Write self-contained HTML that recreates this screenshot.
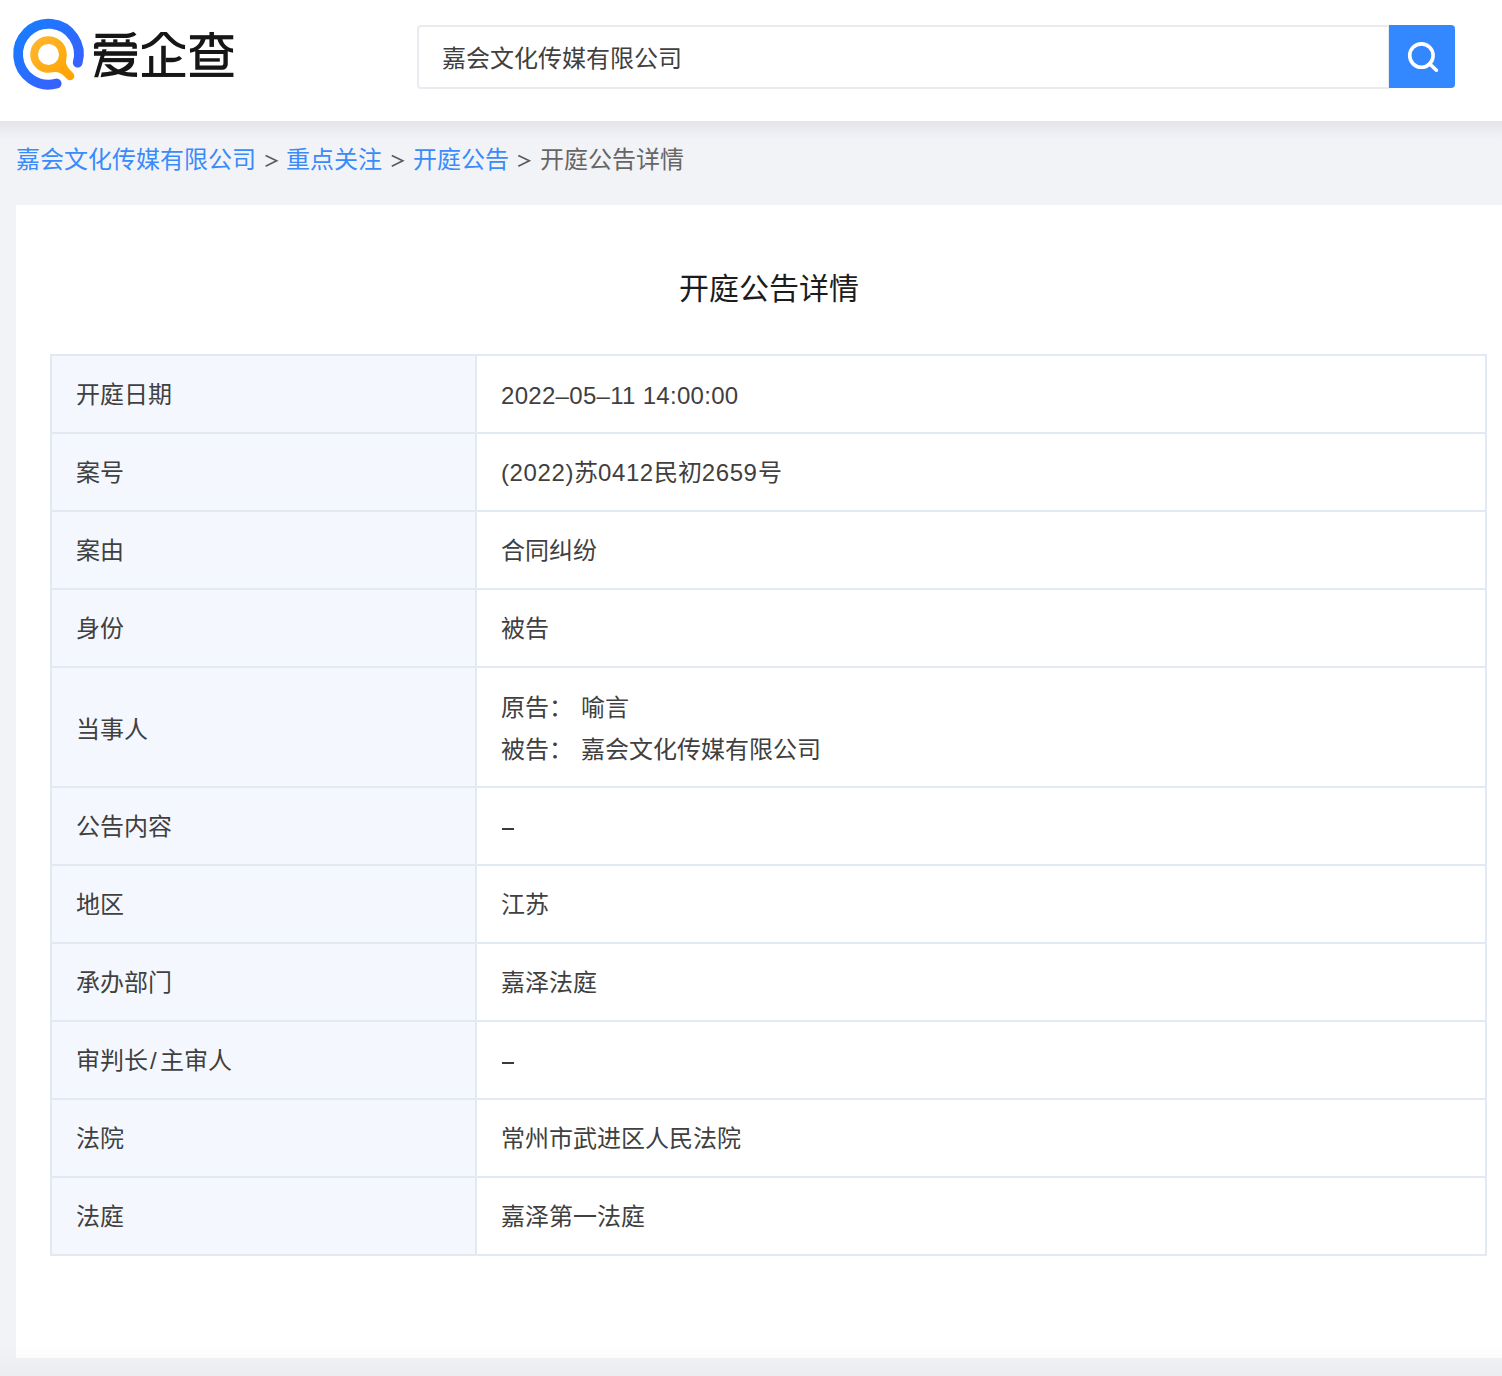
<!DOCTYPE html>
<html lang="zh-CN">
<head>
<meta charset="utf-8">
<title>开庭公告详情</title>
<style>
*{margin:0;padding:0;box-sizing:border-box;}
html,body{width:1502px;height:1376px;overflow:hidden;}
body{background:#F2F3F7;font-family:"Liberation Sans",sans-serif;color:#404040;position:relative;}
.header{position:absolute;left:0;top:0;width:1502px;height:121px;background:#fff;}
.shadow{position:absolute;left:0;top:121px;width:1502px;height:19px;background:linear-gradient(#E4E5EA,#F2F3F7);}
.logo{position:absolute;left:0;top:0;}
.search{position:absolute;left:417px;top:25px;width:973px;height:64px;border:2px solid #E8ECF1;border-radius:4px 0 0 4px;background:#fff;}
.search span{position:absolute;left:23px;top:16px;font-size:24px;line-height:32px;color:#404040;white-space:nowrap;}
.btn{position:absolute;left:1389px;top:25px;width:66px;height:63px;background:#3388FF;border-radius:0 4px 4px 0;}
.bc{position:absolute;left:0;top:130px;width:1502px;height:60px;font-size:24px;line-height:32px;white-space:nowrap;}
.bc a,.bc .cur{position:absolute;top:14px;}
.bc .seps{position:absolute;left:0;top:0;}
.bc a{color:#3A8BFA;text-decoration:none;}
.bc .cur{color:#666;}
.card{position:absolute;left:16px;top:205px;width:1505px;height:1153px;background:#fff;}
.title{position:absolute;left:0;top:63px;width:1505px;text-align:center;font-size:30px;line-height:42px;color:#1c1c1c;}
.tbl{position:absolute;left:34px;top:149px;width:1437px;border:2px solid #E3E9F3;border-bottom:none;}
.row{position:relative;height:78px;border-bottom:2px solid #E3E9F3;}
.row.tall{height:120px;}
.lab{position:absolute;left:0;top:0;bottom:0;width:425px;background:#F4F8FE;border-right:2px solid #E3E9F3;}
.lab span,.val span{position:absolute;left:24px;top:23px;font-size:24px;line-height:32px;white-space:nowrap;}
.val span{top:23px;left:22px;}
.val span.lat{top:24px;}
.val{position:absolute;left:427px;top:0;bottom:0;right:0;}
.tall .lab span{top:46px;}
.dash{position:absolute;left:23px;top:40px;width:12px;height:2px;background:#3a3a3a;}
.sl{font-style:normal;padding:0 3px 0 2px;}
.fade{position:absolute;left:0;top:1342px;width:1502px;height:34px;background:linear-gradient(rgba(0,0,30,0),rgba(0,0,30,0.026));}
.val i{font-style:normal;letter-spacing:0.6px;}
.lat{letter-spacing:0.3px;}
.val b{font-weight:normal;margin-left:8px;}
.tall .val .l1{top:24px;}
.tall .val .l2{top:66px;}
</style>
</head>
<body>
<div class="header">
  <svg class="logo" width="260" height="121" viewBox="0 0 260 121">
    <defs>
      <linearGradient id="gb" x1="0" y1="0" x2="1" y2="1"><stop offset="0" stop-color="#167EFF"/><stop offset="1" stop-color="#3D5CFF"/></linearGradient>
      <linearGradient id="go" x1="0" y1="0" x2="1" y2="0"><stop offset="0" stop-color="#FFB52A"/><stop offset="1" stop-color="#FFA300"/></linearGradient>
    </defs>
    <path d="M56.68,83.48 A30.4,30.4 0 1 1 77.69,62.68" fill="none" stroke="url(#gb)" stroke-width="9.8" stroke-linecap="round"/>
    <g transform="translate(48.5,54.5) rotate(45)">
      <path fill="url(#go)" fill-rule="evenodd" d="M15.43,9.84 A12,12 0 0 1 25.54,4.3 L30.5,4.3 A4.3,4.3 0 0 0 30.5,-4.3 L25.54,-4.3 A12,12 0 0 1 15.43,-9.84 A18.3,18.3 0 1 0 15.43,9.84 Z M10.5,0 A10.5,10.5 0 1 0 -10.5,0 A10.5,10.5 0 1 0 10.5,0 Z"/>
    </g>
    <g fill="#161616">
      <g transform="translate(90,28) scale(0.037793)">
        <path d="M145,150 L960,150 C1040,150 1100,130 1150,100 L1230,175 C1160,235 1060,265 960,265 L145,265 Z"/>
        <rect x="300" y="300" width="110" height="90"/><rect x="615" y="300" width="110" height="90"/><rect x="945" y="300" width="105" height="90"/>
        <path d="M105,550 L105,470 C105,410 140,375 200,375 L1145,375 C1205,375 1240,410 1240,470 L1240,550 L1120,550 L1120,495 L220,495 L220,550 Z"/>
        <rect x="105" y="615" width="1140" height="120"/>
        <path d="M330,565 L440,565 L215,1300 L110,1300 Z"/>
        <rect x="320" y="795" width="845" height="110"/>
        <path d="M1030,900 L1165,795 L1165,905 C1150,1010 1060,1100 920,1160 C760,1230 520,1285 280,1300 L310,1180 C520,1165 680,1130 760,1100 C880,1050 980,970 1030,905 Z"/>
        <path d="M380,960 L540,960 C620,1030 700,1080 790,1115 C920,1165 1080,1180 1245,1180 L1245,1295 C1060,1290 880,1265 740,1215 C600,1165 480,1080 380,960 Z"/>
      </g>
      <g transform="translate(138,28) scale(0.037793)">
        <path d="M600,105 L760,105 C900,260 1050,430 1245,450 L1245,560 C1020,540 830,370 680,185 C530,370 340,540 105,560 L105,450 C300,430 460,260 600,105 Z"/>
        <rect x="615" y="470" width="120" height="740"/>
        <rect x="295" y="740" width="110" height="470"/>
        <path d="M735,790 L900,790 C980,790 1040,775 1090,740 L1165,810 C1090,880 1000,905 900,905 L735,905 Z"/>
        <rect x="105" y="1190" width="1145" height="105"/>
      </g>
      <g transform="translate(186,28) scale(0.037793)">
        <rect x="620" y="105" width="120" height="395"/>
        <rect x="105" y="190" width="1145" height="110"/>
        <path d="M390,290 L520,290 C470,460 350,620 105,655 L105,545 C270,520 360,420 390,290 Z"/>
        <path d="M830,290 L960,290 C990,420 1080,520 1245,545 L1245,655 C1000,620 880,460 830,290 Z"/>
        <path fill-rule="evenodd" d="M245,580 L1105,580 L1105,950 C1105,1040 1040,1105 950,1105 L245,1105 Z M360,690 L990,690 L990,930 C990,970 970,995 930,995 L360,995 Z"/>
        <rect x="360" y="800" width="535" height="90"/>
        <rect x="105" y="1185" width="1150" height="110"/>
      </g>
    </g>
  </svg>
  <div class="search"><span>嘉会文化传媒有限公司</span></div>
  <div class="btn"><svg width="66" height="63" viewBox="1389 25 66 63"><circle cx="1421.4" cy="55.6" r="11.7" fill="none" stroke="#fff" stroke-width="3.6"/><line x1="1429.6" y1="63.8" x2="1436.4" y2="70.2" stroke="#fff" stroke-width="3.6" stroke-linecap="round"/></svg></div>
</div>
<div class="shadow"></div>
<div class="bc">
  <a style="left:16px">嘉会文化传媒有限公司</a>
  <a style="left:286px">重点关注</a>
  <a style="left:413.3px">开庭公告</a>
  <span class="cur" style="left:539.7px">开庭公告详情</span>
  <svg class="seps" width="1502" height="60" viewBox="0 130 1502 60"><g fill="none" stroke="#5c5c5c" stroke-width="1.7"><polyline points="265.6,155.4 276.6,160.8 265.6,166.2"/><polyline points="391.8,155.4 402.8,160.8 391.8,166.2"/><polyline points="518.3,155.4 529.3,160.8 518.3,166.2"/></g></svg>
</div>
<div class="card">
  <div class="title">开庭公告详情</div>
  <div class="tbl">
    <div class="row"><div class="lab"><span>开庭日期</span></div><div class="val"><span class="lat">2022–05–11 14:00:00</span></div></div>
    <div class="row"><div class="lab"><span>案号</span></div><div class="val"><span><i>(2022)</i>苏<i>0412</i>民初<i>2659</i>号</span></div></div>
    <div class="row"><div class="lab"><span>案由</span></div><div class="val"><span>合同纠纷</span></div></div>
    <div class="row"><div class="lab"><span>身份</span></div><div class="val"><span>被告</span></div></div>
    <div class="row tall"><div class="lab"><span>当事人</span></div><div class="val"><span class="l1">原告：<b>喻言</b></span><span class="l2">被告：<b>嘉会文化传媒有限公司</b></span></div></div>
    <div class="row"><div class="lab"><span>公告内容</span></div><div class="val"><div class="dash"></div></div></div>
    <div class="row"><div class="lab"><span>地区</span></div><div class="val"><span>江苏</span></div></div>
    <div class="row"><div class="lab"><span>承办部门</span></div><div class="val"><span>嘉泽法庭</span></div></div>
    <div class="row"><div class="lab"><span>审判长<i class="sl">/</i>主审人</span></div><div class="val"><div class="dash"></div></div></div>
    <div class="row"><div class="lab"><span>法院</span></div><div class="val"><span>常州市武进区人民法院</span></div></div>
    <div class="row"><div class="lab"><span>法庭</span></div><div class="val"><span>嘉泽第一法庭</span></div></div>
  </div>
</div>
<div class="fade"></div>
</body>
</html>
